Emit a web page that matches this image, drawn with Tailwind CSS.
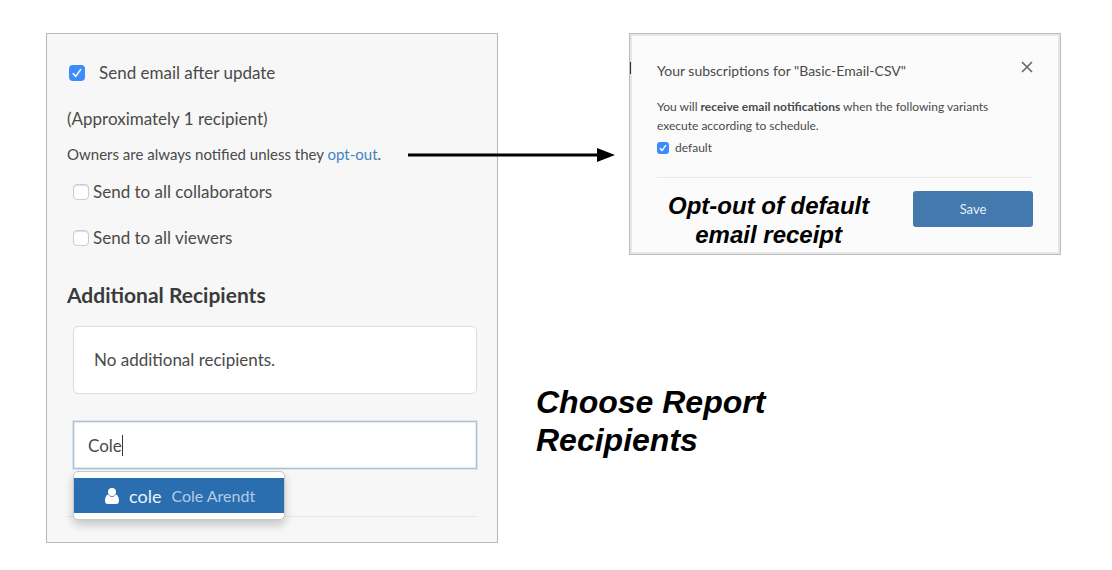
<!DOCTYPE html>
<html lang="en">
<head>
<meta charset="utf-8">
<meta name="viewport" content="width=device-width, initial-scale=1">
<title>Choose Report Recipients</title>
<script src="https://cdn.jsdelivr.net/npm/@tailwindcss/browser@4"></script>
</head>
<body class="bg-white font-[Lato,sans-serif] text-[#4a4a4a]">
<main class="grid grid-cols-[452fr_563fr] items-start pt-[33px] pr-[51px] pl-[46px]">

  <section class="border border-[#b7b7b7] bg-[#f7f7f7] px-5 pt-[27px] pb-[25px] text-[17px] leading-6" aria-label="Email settings">
    <label class="flex items-center gap-3.5 pl-0.5">
      <span class="grid">
        <input type="checkbox" checked class="col-start-1 row-start-1 size-4 appearance-none rounded-[4px] bg-[#3a8dfb]">
        <svg class="pointer-events-none col-start-1 row-start-1 size-4" viewBox="0 0 16 16" fill="none" stroke="#fff" stroke-width="1.6" stroke-linecap="round" stroke-linejoin="round"><path d="M4.300 8.700 6.700 11.400 11.600 4.600"/></svg>
      </span>
      Send email after update
    </label>
    <p class="mt-[22px]">(Approximately 1 recipient)</p>
    <div class="relative mt-[11px]">
      <p class="text-[15px] leading-6">Owners are always notified unless they <a href="#subscriptions" class="text-[#4183c4]">opt-out</a>.</p>
      <svg class="absolute top-[5px] left-[341px] z-10 h-4 w-[208px]" viewBox="0 0 208 16" aria-hidden="true"><path d="M0 8H190" stroke="#000" stroke-width="3"/><path d="M189 1 207 8 189 15Z"/></svg>
    </div>
    <label class="mt-[14px] flex items-center gap-1 pl-1.5">
      <input type="checkbox" class="size-4 appearance-none rounded-[4px] border border-[#cccccc] bg-white shadow-[inset_0_1px_1px_#ddd]">
      Send to all collaborators
    </label>
    <label class="mt-[22px] flex items-center gap-1 pl-1.5">
      <input type="checkbox" class="size-4 appearance-none rounded-[4px] border border-[#cccccc] bg-white shadow-[inset_0_1px_1px_#ddd]">
      Send to all viewers
    </label>
    <h2 class="mt-[31px] text-[21px] leading-7 font-bold text-[#3b3b3b]">Additional Recipients</h2>
    <div class="mt-[17px] ml-1.5 rounded-[5px] border border-[#dcdcdc] bg-white px-5 py-[21px]">No additional recipients.</div>
    <div class="relative mt-[27px] ml-1.5">
      <input type="text" value="Cole" aria-label="Add recipient" class="block h-12 w-full border border-[#b0bfcf] bg-white px-[14px] shadow-[0_0_0_1px_#dde6f0,inset_0_0_0_1px_#e3ebf5] outline-none">
      <span class="absolute top-3.5 left-[49px] h-[21px] w-px bg-[#333]"></span>
      <div role="listbox" class="absolute top-[50px] left-0 w-[212px] rounded-[5px] border border-[#c8c8c8] bg-white py-1.5 shadow-[0_5px_10px_rgba(0,0,0,0.2)]">
        <button type="button" role="option" aria-selected="true" class="flex h-[35px] w-full items-center bg-[#2a6eb0] pl-[31px] text-[#eef4fa]">
          <svg class="h-4 w-[14px]" viewBox="0 0 14 16" fill="#fff"><circle cx="7" cy="4" r="4"/><path d="M3.200 6.400C1 6.900 0 9.400 0 13c0 1.800 1.100 3 2.700 3h8.600c1.600 0 2.700-1.200 2.700-3 0-3.600-1-6.100-3.200-6.600C9.800 8 8.500 8.800 7 8.800s-2.800-.8-3.800-2.400Z"/></svg>
          <span class="ml-2.5 text-[18px]">cole</span>
          <span class="ml-2.5 text-[16px] text-[#b3cce4]">Cole Arendt</span>
        </button>
      </div>
    </div>
    <hr class="mt-[47px] border-[#e6e6e6]">
  </section>

  <div>
    <section id="subscriptions" role="dialog" aria-labelledby="dialog-title" class="relative ml-[131px] border border-[#bdbdbd] bg-[#fbfbfb] px-[27px] pt-[25px] pb-[5px] text-[12px] leading-[19px] shadow-[inset_0_0_0_2px_#e6e6e6]">
      <span class="absolute top-7 left-0 h-3 w-px bg-[#333]"></span>
      <div class="flex items-start justify-between">
        <h2 id="dialog-title" class="text-[14px] leading-6">Your subscriptions for "Basic-Email-CSV"</h2>
        <button type="button" aria-label="Close" class="mt-0.5 grid size-3"><svg class="size-3" viewBox="0 0 12 12" stroke="#666" stroke-width="1.6"><path d="M1 1 11 11M11 1 1 11"/></svg></button>
      </div>
      <p class="mt-[14px] pr-8">You will <strong>receive email notifications</strong> when the following variants execute according to schedule.</p>
      <label class="mt-[3px] flex items-center gap-1.5">
        <span class="grid">
          <input type="checkbox" checked class="col-start-1 row-start-1 size-3 appearance-none rounded-[3px] bg-[#3a8dfb]">
          <svg class="pointer-events-none col-start-1 row-start-1 size-3" viewBox="0 0 16 16" fill="none" stroke="#fff" stroke-width="1.800" stroke-linecap="round" stroke-linejoin="round"><path d="M4.300 8.700 6.700 11.400 11.600 4.600"/></svg>
        </span>
        default
      </label>
      <hr class="mt-5 border-[#e8e8e8]">
      <div class="mt-[13px] flex items-start justify-between">
        <p class="ml-[11px] text-center font-['Liberation_Sans',sans-serif] text-[24px] leading-[29px] font-bold text-black italic">Opt-out of default<br>email receipt</p>
        <button type="button" class="h-9 w-[120px] rounded-[3px] bg-[#4479ae] text-[13px] text-[#e6eef6]">Save</button>
      </div>
    </section>
    <h1 class="mt-[128px] ml-[38px] w-64 font-['Liberation_Sans',sans-serif] text-[32px] leading-[38px] font-bold text-black italic">Choose Report Recipients</h1>
  </div>
</main>
</body>
</html>
